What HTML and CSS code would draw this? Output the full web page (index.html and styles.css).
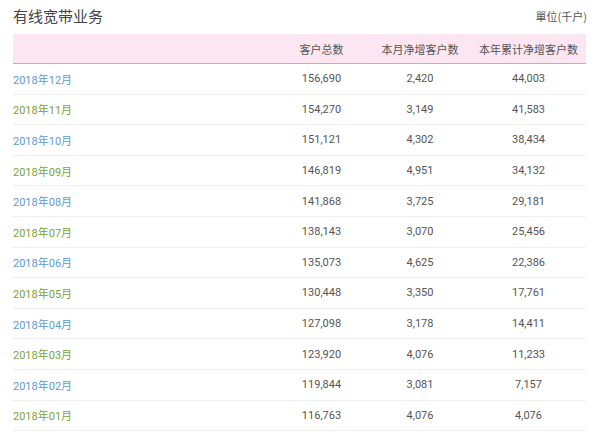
FILE: index.html
```html
<!DOCTYPE html>
<html lang="zh">
<head>
<meta charset="utf-8">
<link rel="stylesheet" href="styles.css">
</head>
<body>
<div class="page">
  <div class="top">
    <h1 class="title">有线宽带业务</h1>
    <span class="unit">單位(千戶)</span>
  </div>
  <table class="data">
    <thead>
      <tr>
        <th class="c-date"></th>
        <th class="c1">客户总数</th>
        <th class="c2">本月净增客户数</th>
        <th class="c3">本年累计净增客户数</th>
      </tr>
    </thead>
    <tbody>
      <tr><td class="date blue">2018年12月</td><td>156,690</td><td>2,420</td><td>44,003</td></tr>
      <tr><td class="date green">2018年11月</td><td>154,270</td><td>3,149</td><td>41,583</td></tr>
      <tr><td class="date blue">2018年10月</td><td>151,121</td><td>4,302</td><td>38,434</td></tr>
      <tr><td class="date green">2018年09月</td><td>146,819</td><td>4,951</td><td>34,132</td></tr>
      <tr><td class="date blue">2018年08月</td><td>141,868</td><td>3,725</td><td>29,181</td></tr>
      <tr><td class="date green">2018年07月</td><td>138,143</td><td>3,070</td><td>25,456</td></tr>
      <tr><td class="date blue">2018年06月</td><td>135,073</td><td>4,625</td><td>22,386</td></tr>
      <tr><td class="date green">2018年05月</td><td>130,448</td><td>3,350</td><td>17,761</td></tr>
      <tr><td class="date blue">2018年04月</td><td>127,098</td><td>3,178</td><td>14,411</td></tr>
      <tr><td class="date green">2018年03月</td><td>123,920</td><td>4,076</td><td>11,233</td></tr>
      <tr><td class="date blue">2018年02月</td><td>119,844</td><td>3,081</td><td>7,157</td></tr>
      <tr><td class="date green">2018年01月</td><td>116,763</td><td>4,076</td><td>4,076</td></tr>
    </tbody>
  </table>
</div>
</body>
</html>
```

FILE: styles.css
```css
html, body {
  margin: 0;
  padding: 0;
  background: #ffffff;
}

body {
  font-family: Roboto, "Noto Sans CJK SC", sans-serif;
  color: #444;
}

.page {
  margin: 0 14px 0 13px;
}

.top {
  height: 34px;
  display: flex;
  align-items: center;
  justify-content: space-between;
}

.title {
  margin: 0;
  font-size: 15px;
  font-weight: normal;
  color: #444;
  font-family: Roboto, "Noto Sans CJK SC", sans-serif;
  line-height: 1;
  padding-top: 1px;
}

.unit {
  font-size: 11px;
  color: #555;
  font-family: "Noto Sans CJK TC", sans-serif;
  margin-right: -1px;
  margin-top: -2px;
}

.data {
  width: 100%;
  border-collapse: collapse;
  font-size: 11px;
}

.data thead tr {
  background: #fbe6f1;
}

.data th {
  height: 29px;
  padding: 0;
  font-weight: normal;
  color: #555;
  text-align: center;
  border-bottom: 1.5px solid #dc9cc1;
}

.data .c1 { width: 95px; }
.data .c2 { width: 102px; }
.data .c3 { width: 115px; }

.data td {
  height: 29.6px;
  padding: 0;
  text-align: center;
  color: #555;
  border-bottom: 1px solid #eeeeee;
}

.data td.date {
  text-align: left;
}

.blue { color: #5e9ad2 !important; }
.green { color: #7aa43a !important; }
```
